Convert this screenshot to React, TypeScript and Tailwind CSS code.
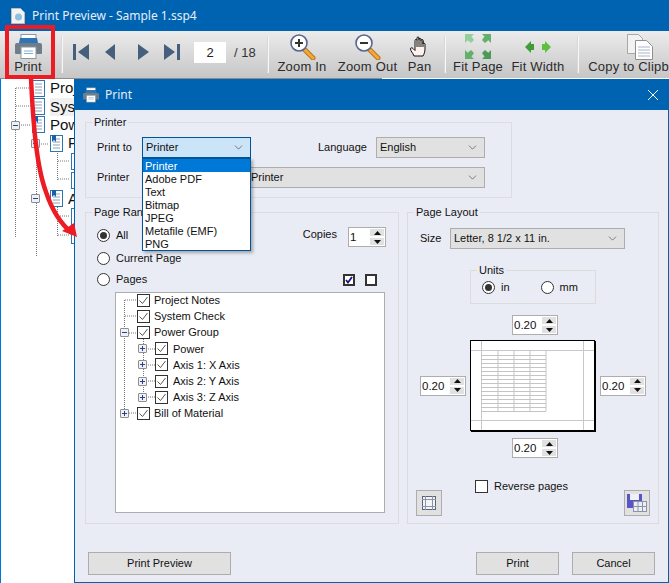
import React from "react";
import { ChevronDown } from "lucide-react";

const PrinterIcon = ({ className }: { className?: string }) => (
  <svg viewBox="0 0 27 25" className={className}>
    <rect x="6" y="0.5" width="15" height="7" fill="#fff" stroke="#8a97a3" />
    <path d="M5 4h17l1 5H4z" fill="#2f74b5" />
    <path d="M2 9h23a2 2 0 0 1 2 2v8a1 1 0 0 1-1 1H1a1 1 0 0 1-1-1v-8a2 2 0 0 1 2-2z" fill="#6f7d88" />
    <rect x="6" y="13" width="15" height="11.5" fill="#fff" stroke="#8a97a3" />
    <path d="M9 17h9M9 19.5h9" stroke="#7fb2dc" />
  </svg>
);

const Magnifier = ({ plus }: { plus?: boolean }) => (
  <svg viewBox="0 0 27 26" className="w-[27px] h-[26px]">
    <path d="M16 16l8 8" stroke="#b87413" strokeWidth="5" strokeLinecap="round" />
    <path d="M16 16l8 8" stroke="#f4a83c" strokeWidth="3" strokeLinecap="round" />
    <circle cx="10" cy="9" r="8" fill="#fff" stroke="#59658f" strokeWidth="1.6" />
    <path d="M6 9h8" stroke="#333" strokeWidth="2" />
    {plus && <path d="M10 5v8" stroke="#333" strokeWidth="2" />}
  </svg>
);

const HandIcon = () => (
  <svg viewBox="0 0 20 22" className="w-[20px] h-[22px]">
    <path
      d="M4 20c-1-3-3.500-5-3.500-7 0-1.500 1.500-1.500 2.500-.5l2 2V4.500c0-1.500 2-1.500 2 0V2c0-1.500 2-1.500 2 0v1.500c0-1.500 2-1.500 2 0v1c0-1.500 2-1.500 2 0V8c0-1 2-1 2 0v5c0 3-1 5-2 7z"
      fill="#fdf2ee"
      stroke="#111"
      strokeWidth="1"
    />
    <path d="M7 4.500V11M9 2v9M11 3.500V11M13 4.500V11" stroke="#111" strokeWidth="1" />
  </svg>
);

const FitPageIcon = () => (
  <svg viewBox="0 0 26 25" className="w-[26px] h-[25px]">
    <path d="M0 0h9L6.500 2.500 9 6 6 9 2.700 6.300 0 9z" fill="#93cf9b" />
    <path d="M26 0h-9l2.500 2.500L17 6l3 3 3.300-2.700L26 9z" fill="#62b06c" />
    <path d="M0 25h9l-2.500-2.500L9 19l-3-3-3.300 2.700L0 16z" fill="#62b06c" />
    <path d="M26 25h-9l2.500-2.500L17 19l3-3 3.300 2.700L26 16z" fill="#4c9a58" />
  </svg>
);

const FitWidthIcon = () => (
  <svg viewBox="0 0 26 12" className="w-[26px] h-[12px]">
    <path d="M0 6l6-6v3h3v6H6v3z" fill="#3f9c36" />
    <path d="M26 6l-6-6v3h-3v6h3v3z" fill="#5fbf3f" />
  </svg>
);

const CopyIcon = () => (
  <svg viewBox="0 0 26 26" className="w-[26px] h-[26px] mr-[4px]">
    <path d="M.5.5h11l4 4v15H.5z" fill="#f2f2f2" stroke="#a8a8a8" />
    <path d="M8.500 6.500h11l6 6v13h-17z" fill="#fff" stroke="#8f8f8f" />
    <path d="M11 13h12M11 16h12M11 19h12M11 22h12" stroke="#aab4cf" />
  </svg>
);

const Tool = ({ label, width, icon }: { label: string; width: string; icon: React.ReactNode }) => (
  <div className={`${width} shrink-0 flex flex-col items-center`}>
    <div className="h-[27px] flex items-center justify-center">{icon}</div>
    <span className="-mt-px text-[13px] leading-[16px] tracking-[0.2px] whitespace-nowrap text-[#2b2b2b]">{label}</span>
  </div>
);

const Separator = ({ className }: { className?: string }) => (
  <div className={`w-[2px] h-[37px] mt-[3px] shrink-0 bg-[#f7f7f7] border-l border-[#d8d8d8] ${className ?? ""}`} />
);

const DocIcon = ({ book }: { book?: boolean }) => (
  <svg viewBox="0 0 13 17" className="w-[13px] h-[17px] shrink-0">
    <rect x="0.5" y="0.5" width="12" height="16" fill="#fff" stroke="#2f74b5" />
    <path d="M3 4h7M3 7h7M3 10h7M3 13h7" stroke="#8aa0b8" />
    {book && <path d="M2 0h4v7L4 5 2 7z" fill="#1b5fa8" />}
  </svg>
);

const ExpandBox = ({ open }: { open?: boolean }) => (
  <span className="relative w-[9px] h-[9px] shrink-0 bg-[#eef1f6] border border-[#8e8e8e] rounded-[1px] flex items-center justify-center">
    <span className="w-[5px] h-px bg-[#2a3f8f]" />
    {!open && <span className="absolute w-px h-[5px] bg-[#2a3f8f]" />}
  </span>
);

const bgRows = [
  { text: "Project Notes", indent: "pl-[31px]" },
  { text: "System Check", indent: "pl-[31px]", hover: true },
  { text: "Power Group", indent: "pl-[31px]", book: true },
  { text: "Power", indent: "pl-[49px]", book: true },
  { text: "", indent: "pl-[70px]" },
  { text: "", indent: "pl-[70px]" },
  { text: "Axis 1: X Axis", indent: "pl-[49px]", book: true },
  { text: "", indent: "pl-[70px]" },
  { text: "", indent: "pl-[70px]" },
];

const Fieldset = ({ title, className, children }: { title: string; className?: string; children: React.ReactNode }) => (
  <fieldset className={`border border-[#dcdcdc] min-w-0 ${className ?? ""}`}>
    <legend className="ml-[6px] px-[2px] h-[14px] leading-[14px] text-[11px] text-[#111]">{title}</legend>
    {children}
  </fieldset>
);

const Combo = ({ value, className, active }: { value: string; className?: string; active?: boolean }) => (
  <div
    className={`h-[21px] flex items-center justify-between pl-[3px] pr-[5px] border text-[11px] text-[#111] ${
      active ? "bg-[#cce4f7] border-[#005499]" : "bg-[#e1e1e1] border-[#adadad]"
    } ${className ?? ""}`}
  >
    <span className="whitespace-nowrap">{value}</span>
    <ChevronDown size={13} strokeWidth={1.2} className="text-[#444]" />
  </div>
);

const Radio = ({ checked }: { checked?: boolean }) => (
  <span className="w-[13px] h-[13px] shrink-0 rounded-full border border-[#333] bg-white flex items-center justify-center">
    {checked && <span className="w-[7px] h-[7px] rounded-full bg-[#333]" />}
  </span>
);

const RadioRow = ({ label, checked, className }: { label: string; checked?: boolean; className?: string }) => (
  <div className={`flex items-center gap-[6px] text-[11px] text-[#111] ${className ?? ""}`}>
    <Radio checked={checked} />
    <span>{label}</span>
  </div>
);

const Spinner = ({ value, className }: { value: string; className?: string }) => (
  <div className={`h-[20px] flex shrink-0 border border-[#adadad] bg-white ${className ?? "w-[46px]"}`}>
    <span className="flex-1 pl-[1px] text-[11.5px] leading-[18px] text-[#111]">{value}</span>
    <div className="w-[14px] m-[1px] flex flex-col gap-[2px]">
      <div className="flex-1 bg-[#e1e1e1] flex items-center justify-center">
        <svg viewBox="0 0 7 4" className="w-[7px] h-[4px]"><path d="M3.500 0L7 4H0z" fill="#111" /></svg>
      </div>
      <div className="flex-1 bg-[#e1e1e1] flex items-center justify-center">
        <svg viewBox="0 0 7 4" className="w-[7px] h-[4px]"><path d="M3.500 4L7 0H0z" fill="#111" /></svg>
      </div>
    </div>
  </div>
);

const Check = () => (
  <span className="w-[13px] h-[13px] shrink-0 border border-[#333] bg-white flex items-center justify-center">
    <svg viewBox="0 0 11 11" className="w-[11px] h-[11px]">
      <path d="M1.500 5.500l3 3 5-6.500" fill="none" stroke="#555" strokeWidth="1" />
    </svg>
  </span>
);

const treeRows = [
  { text: "Project Notes", level: 0 },
  { text: "System Check", level: 0 },
  { text: "Power Group", level: 0, box: "open" },
  { text: "Power", level: 1, box: "closed" },
  { text: "Axis 1: X Axis", level: 1, box: "closed" },
  { text: "Axis 2: Y Axis", level: 1, box: "closed" },
  { text: "Axis 3: Z Axis", level: 1, box: "closed" },
  { text: "Bill of Material", level: 0, box: "closed" },
];

const DialogButton = ({ label, className }: { label: string; className: string }) => (
  <button className={`h-[23px] bg-[#e1e1e1] border border-[#adadad] text-[11px] text-[#111] ${className}`}>{label}</button>
);

const PagePreview = () => (
  <div className="w-[125px] h-[91px] shrink-0 bg-white border border-black shadow-[1px_1px_0_#000]">
    <svg viewBox="0 0 123 89" className="w-full h-full">
      <path d="M10.500 0v89M112.500 0v89M0 9.500h123M0 79.500h123" stroke="#c8c8c8" fill="none" />
      <path
        d="M27 10v60M43 10v60M59 10v60M75 10v60M10 14.500h65M10 18.500h65M10 22.500h65M10 26.500h65M10 30.500h65M10 34.500h65M10 38.500h65M10 42.500h65M10 46.500h65M10 50.500h65M10 54.500h65M10 58.500h65M10 62.500h65M10 66.500h65M10 70.500h65"
        stroke="#c4c4c4"
        fill="none"
      />
    </svg>
  </div>
);

export default function App() {
  return (
    <div className="relative w-[669px] h-[583px] overflow-hidden bg-white font-['Liberation_Sans',sans-serif]">
      {/* Preview window */}
      <div className="h-[31px] bg-[#0063b1] flex items-center pl-[11px]">
        <svg viewBox="0 0 14 16" className="w-[14px] h-[16px]">
          <path d="M.5.5h9l4 4v11H.5z" fill="#f4f4f4" stroke="#bcbcbc" />
          <circle cx="7.500" cy="9" r="3.500" fill="#8fc0e0" />
        </svg>
        <span className="ml-[7px] text-[12px] font-['Noto_Sans',sans-serif] text-[#e6eef7]">
          Print Preview - Sample 1.ssp4
        </span>
      </div>
      <div className="h-[47px] flex bg-gradient-to-b from-[#ececec] to-[#c6c6c6] pt-[2px]">
        <Tool label="Print" width="w-[56px]" icon={<PrinterIcon className="w-[27px] h-[25px]" />} />
        <Separator className="ml-[5px]" />
        <div className="flex items-start">
          <svg viewBox="0 0 16 16" className="ml-[10px] mt-[11px] w-[16px] h-[16px]"><path d="M0 0h3v16H0zM16 0v16L5 8z" fill="#465f7d" /></svg>
          <svg viewBox="0 0 10 16" className="ml-[16px] mt-[11px] w-[10px] h-[16px]"><path d="M10 0v16L0 8z" fill="#465f7d" /></svg>
          <svg viewBox="0 0 11 16" className="ml-[23px] mt-[11px] w-[11px] h-[16px]"><path d="M0 0v16l11-8z" fill="#465f7d" /></svg>
          <svg viewBox="0 0 16 16" className="ml-[15px] mt-[11px] w-[16px] h-[16px]"><path d="M16 0h-3v16h3zM0 0v16l11-8z" fill="#465f7d" /></svg>
          <div className="ml-[14px] mt-[9px] w-[32px] h-[21px] bg-white text-center text-[13px] leading-[21px] text-[#222]">2</div>
          <span className="ml-[8px] mt-[9px] w-[33px] text-[13px] leading-[21px] text-[#333]">/ 18</span>
        </div>
        <Separator />
        <Tool label="Zoom In" width="w-[66px]" icon={<Magnifier plus />} />
        <Tool label="Zoom Out" width="w-[65px]" icon={<Magnifier />} />
        <Tool label="Pan" width="w-[39px]" icon={<HandIcon />} />
        <Separator className="ml-[5px]" />
        <Tool label="Fit Page" width="w-[64px]" icon={<FitPageIcon />} />
        <Tool label="Fit Width" width="w-[56px]" icon={<FitWidthIcon />} />
        <Separator className="ml-[11px]" />
        <Tool label="Copy to Clipboard" width="w-[126px]" icon={<CopyIcon />} />
      </div>
      <div className="h-px flex">
        <div className="w-[382px] bg-[#8c8c8c]" />
        <div className="flex-1 bg-white" />
      </div>

      {/* Tree behind the dialog */}
      <div className="relative w-[74px] h-[504px] overflow-hidden border-l border-[#0078d7]">
        <svg className="absolute left-0 top-0 w-[74px] h-[180px]">
          <path
            d="M14.500 9v150M15 9h15M15 27h15M20 46h10M35.500 52v125M40 65h8M56.500 72v30M57 82h12M57 100h12M56.500 128v30M57 137h12M57 156h12"
            stroke="#777"
            strokeDasharray="1 1"
            fill="none"
          />
        </svg>
        {bgRows.map((row, i) => (
          <div key={i} className={`relative flex items-center h-[18.4px] ${row.indent}`}>
            <DocIcon book={row.book} />
            {row.text && (
              <span className={`ml-[5px] text-[15px] leading-[18px] whitespace-nowrap text-[#111] ${row.hover ? "bg-[#f0f0f0]" : ""}`}>
                {row.text}
              </span>
            )}
          </div>
        ))}
        <div className="absolute left-[10px] top-[42px]"><ExpandBox open /></div>
        <div className="absolute left-[30px] top-[60px]"><ExpandBox open /></div>
        <div className="absolute left-[30px] top-[115px]"><ExpandBox open /></div>
      </div>

      {/* Print dialog */}
      <div className="absolute left-[74px] top-[79px] w-[595px] h-[504px] flex flex-col border border-[#0063b1] bg-[#e9ecf4]">
        <div className="h-[30px] shrink-0 bg-[#0063b1] flex items-center pl-[8px] pr-[10px]">
          <PrinterIcon className="w-[16px] h-[16px]" />
          <span className="ml-[6px] text-[12px] font-['Noto_Sans',sans-serif] text-[#e6eef7]">Print</span>
          <svg viewBox="0 0 10 10" className="ml-auto w-[10px] h-[10px]">
            <path d="M0 0l10 10M10 0L0 10" stroke="#fff" strokeWidth="1" />
          </svg>
        </div>

        <div className="flex-1 pt-[5px] pl-[10px]">
          <Fieldset title="Printer" className="w-[427px] h-[83px]">
            <div className="pt-[8px] pl-[11px]">
              <div className="flex items-center h-[21px]">
                <span className="w-[45px] text-[11px] text-[#111]">Print to</span>
                <div className="relative z-10 w-[109px]">
                  <Combo value="Printer" active />
                  <ul className="absolute left-0 top-full w-[109px] h-[93px] bg-white border border-[#005499] text-[11px] leading-[14px] text-[#111] shadow-[2px_2px_3px_rgba(0,0,0,0.3)]">
                    <li className="px-[2px] h-[13px] bg-[#0078d7] text-white">Printer</li>
                    {["Adobe PDF", "Text", "Bitmap", "JPEG", "Metafile (EMF)", "PNG"].map((item) => (
                      <li key={item} className="px-[2px] h-[13px]">{item}</li>
                    ))}
                  </ul>
                </div>
                <span className="ml-[67px] w-[58px] text-[11px] text-[#111]">Language</span>
                <Combo value="English" className="w-[109px]" />
              </div>
              <div className="flex items-center h-[21px] mt-[9px]">
                <span className="w-[45px] text-[11px] text-[#111]">Printer</span>
                <Combo value="Printer" className="w-[343px] pl-[108px]" />
              </div>
            </div>
          </Fieldset>

          <div className="flex gap-[8px] mt-[7px]">
            <Fieldset title="Page Range" className="w-[314px] h-[319px]">
              <div className="pt-[8px] pl-[11px] pr-[12px]">
                <div className="flex justify-between h-[20px]">
                  <RadioRow label="All" checked className="h-[13px] mt-[2px]" />
                  <div className="flex items-center">
                    <span className="mr-[11px] mb-[5px] text-[11px] text-[#111]">Copies</span>
                    <Spinner value="1" className="w-[38px]" />
                  </div>
                </div>
                <RadioRow label="Current Page" className="h-[20px] mt-[1px]" />
                <div className="flex justify-between items-center h-[20px] mt-[1px]">
                  <RadioRow label="Pages" />
                  <div className="flex gap-[10px] pr-[9px] mt-[2px]">
                    <span className="w-[12px] h-[12px] border-2 border-[#333] bg-white flex items-center justify-center">
                      <svg viewBox="0 0 8 8" className="w-[8px] h-[8px]">
                        <path d="M1 4l2 2.500L7 1" fill="none" stroke="#14147a" strokeWidth="1.800" />
                      </svg>
                    </span>
                    <span className="w-[12px] h-[12px] border-2 border-[#333] bg-white" />
                  </div>
                </div>
                <div className="relative ml-[18px] mt-[3px] w-[270px] h-[221px] border border-[#adadad] bg-white">
                  <svg className="absolute left-0 top-0 w-[60px] h-[130px]">
                    <path
                      d="M8.500 7v113M9 7h12M9 23h12M9 40h12M9 120h12M27.500 46v58M28 56h11M28 72h11M28 88h11M28 104h11"
                      stroke="#777"
                      strokeDasharray="1 1"
                      fill="none"
                    />
                  </svg>
                  <div className="relative -mt-px">
                    {treeRows.map((row) => (
                      <div key={row.text} className={`flex items-center h-[16.2px] ${row.level === 0 ? "pl-[4px]" : "pl-[22px]"}`}>
                        <span className="w-[9px] h-[9px] shrink-0">
                          {row.box && <ExpandBox open={row.box === "open"} />}
                        </span>
                        <span className="ml-[8px]"><Check /></span>
                        <span className={`text-[11px] leading-[14px] whitespace-nowrap text-[#111] ${row.level === 0 ? "ml-[4px]" : "ml-[5px]"}`}>{row.text}</span>
                      </div>
                    ))}
                  </div>
                </div>
              </div>
            </Fieldset>

            <Fieldset title="Page Layout" className="w-[252px] h-[319px]">
              <div className="pt-[9px]">
                <div className="flex items-center h-[21px] pl-[12px]">
                  <span className="w-[30px] text-[11px] text-[#111]">Size</span>
                  <Combo value="Letter, 8 1/2 x 11 in." className="w-[175px]" />
                </div>
                <Fieldset title="Units" className="ml-[62px] mt-[14px] w-[126px] h-[41px]">
                  <div className="flex items-center h-[19px] pt-[2px] pl-[11px]">
                    <RadioRow label="in" checked />
                    <RadioRow label="mm" className="ml-[31px]" />
                  </div>
                </Fieldset>
                <Spinner value="0.20" className="w-[46px] ml-[104px] mt-[11px]" />
                <div className="flex items-center pl-[12px] mt-[5px]">
                  <Spinner value="0.20" />
                  <div className="ml-[4px]"><PagePreview /></div>
                  <Spinner value="0.20" className="w-[46px] ml-[5px]" />
                </div>
                <Spinner value="0.20" className="w-[46px] ml-[104px] mt-[7px]" />
                <div className="flex h-[36px] mt-[22px] pl-[8px] pr-[8px]">
                  <button className="self-end w-[26px] h-[26px] bg-[#e1e1e1] border border-[#adadad] flex items-center justify-center">
                    <svg viewBox="0 0 14 14" className="w-[14px] h-[14px]">
                      <rect x="0.500" y="0.500" width="13" height="13" fill="#f4f4f4" stroke="#5a6478" />
                      <path d="M3.500 0v14M10.500 0v14M0 3.500h14M0 10.500h14" stroke="#8a94a8" />
                    </svg>
                  </button>
                  <div className="ml-[33px] self-start flex items-center gap-[6px] text-[11px] leading-[13px] text-[#111]">
                    <span className="w-[13px] h-[13px] border border-[#333] bg-white" />
                    <span>Reverse pages</span>
                  </div>
                  <button className="ml-auto self-end w-[26px] h-[26px] bg-[#e1e1e1] border border-[#adadad] flex items-center justify-center">
                    <svg viewBox="0 0 20 18" className="w-[20px] h-[18px]">
                      <path d="M0 0h15v14H0z" fill="#5656c8" />
                      <rect x="3" y="0" width="9" height="6" fill="#eef0fa" />
                      <rect x="6.500" y="7.500" width="13" height="10" fill="#eceef5" stroke="#8a94a8" />
                      <path d="M11 7v11M15.500 7v11M6.500 12.500h13" stroke="#8a94a8" />
                    </svg>
                  </button>
                </div>
              </div>
            </Fieldset>
          </div>
        </div>

        <div className="flex pl-[13px] pr-[13px] pb-[7px]">
          <DialogButton label="Print Preview" className="w-[143px]" />
          <DialogButton label="Print" className="ml-auto w-[83px]" />
          <DialogButton label="Cancel" className="ml-[13px] w-[83px]" />
        </div>
      </div>

      {/* Red callout */}
      <svg className="absolute left-0 top-0 w-[669px] h-[583px] pointer-events-none">
        <rect x="7" y="27" width="46" height="50" fill="none" stroke="#ed1c24" strokeWidth="4" />
        <path d="M31 78C33 120 36 165 46 192C52 210 62 225 72 233" fill="none" stroke="#ed1c24" strokeWidth="4.500" />
        <path d="M77 237L62 231L74 223z" fill="#ed1c24" />
      </svg>
    </div>
  );
}
